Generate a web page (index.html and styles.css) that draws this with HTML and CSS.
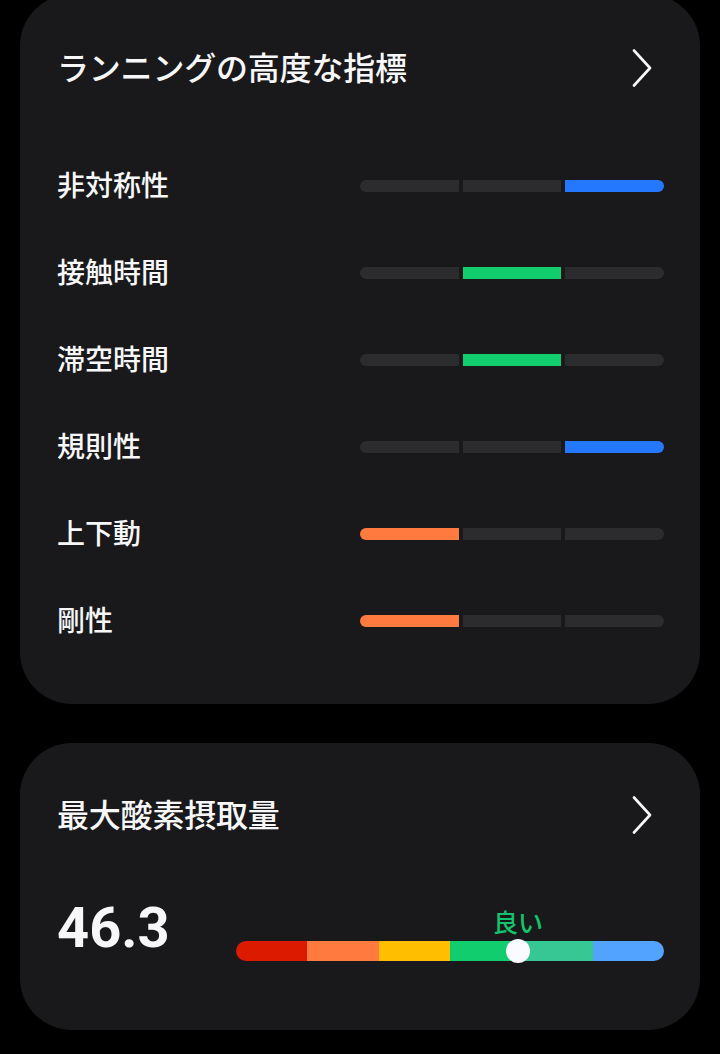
FILE: index.html
```html
<!DOCTYPE html>
<html lang="ja">
<head>
    <meta charset="UTF-8">
    <meta name="viewport" content="width=device-width, initial-scale=1.0">
    <title>ランニングの高度な指標</title>
    <link rel="stylesheet" href="styles.css">
</head>
<body>

<div class="card card-metrics">
    <div class="card-header">
        <h2>ランニングの高度な指標</h2>
        <svg class="chevron" width="20" height="38" viewBox="0 0 20 38"><polyline points="2,1.5 18,19 2,36.5" /></svg>
    </div>

    <div class="metric">
        <span class="metric-name">非対称性</span>
        <div class="segments"><span></span><span></span><span class="on blue"></span></div>
    </div>
    <div class="metric">
        <span class="metric-name">接触時間</span>
        <div class="segments"><span></span><span class="on green"></span><span></span></div>
    </div>
    <div class="metric">
        <span class="metric-name">滞空時間</span>
        <div class="segments"><span></span><span class="on green"></span><span></span></div>
    </div>
    <div class="metric">
        <span class="metric-name">規則性</span>
        <div class="segments"><span></span><span></span><span class="on blue"></span></div>
    </div>
    <div class="metric">
        <span class="metric-name">上下動</span>
        <div class="segments"><span class="on orange"></span><span></span><span></span></div>
    </div>
    <div class="metric">
        <span class="metric-name">剛性</span>
        <div class="segments"><span class="on orange"></span><span></span><span></span></div>
    </div>
</div>

<div class="card card-vo2">
    <div class="card-header">
        <h2>最大酸素摂取量</h2>
        <svg class="chevron" width="20" height="38" viewBox="0 0 20 38"><polyline points="2,1.5 18,19 2,36.5" /></svg>
    </div>

    <div class="vo2-body">
        <div class="vo2-value">46.3</div>
        <div class="scale">
            <div class="scale-label-row">
                <span class="scale-label" style="left: 65.9%">良い</span>
            </div>
            <div class="scale-bar">
                <span class="c1"></span><span class="c2"></span><span class="c3"></span>
                <span class="c4"></span><span class="c5"></span><span class="c6"></span>
                <span class="knob" style="left: 65.9%"></span>
            </div>
        </div>
    </div>
</div>

</body>
</html>
```

FILE: styles.css
```css
body {
    margin: 0;
    padding: 0 20px;
    background: #000;
    color: #f7f7f9;
    font-family: "Noto Sans CJK JP", "Noto Sans", sans-serif;
}
.card {
    background: #19191b;
    border-radius: 52px;
    padding: 0 36px 0 37px;
}
.card-metrics {
    margin-top: -6px;
    padding-top: 32px;
    padding-bottom: 42px;
}
.card-vo2 {
    margin-top: 39px;
    padding-top: 30px;
    padding-bottom: 69px;
}
.card-header {
    height: 80px;
    display: flex;
    align-items: center;
    justify-content: space-between;
}
.card-header h2 {
    margin: 0;
    font-size: 32px;
    font-weight: 500;
    letter-spacing: -0.2px;
}
.chevron {
    margin-top: 4px;
    margin-right: 12px;
}
.chevron polyline {
    fill: none;
    stroke: #f7f7f9;
    stroke-width: 2.6;
    stroke-linecap: round;
    stroke-linejoin: round;
}
.card-metrics .card-header {
    margin-bottom: 34px;
}
.metric {
    height: 87px;
    display: flex;
    align-items: center;
    justify-content: space-between;
}
.metric-name {
    font-size: 28px;
    font-weight: 500;
}
.segments {
    width: 304px;
    height: 12px;
    display: grid;
    grid-template-columns: 1fr 1fr 1fr;
    gap: 4px;
    border-radius: 6px;
    overflow: hidden;
}
/* the bar sits a little lower than the text centre */
.metric .segments {
    margin-top: 5px;
}
.segments span {
    background: #2c2c2e;
}
.segments .blue { background: #2478fe; }
.segments .green { background: #12cd6e; }
.segments .orange { background: #ff7a3f; }

.vo2-body {
    display: flex;
    align-items: flex-start;
    justify-content: space-between;
    margin-top: 47px;
}
.vo2-value {
    font-family: Roboto, "Liberation Sans", sans-serif;
    font-size: 56px;
    font-weight: 700;
    line-height: 1;
}
.scale {
    width: 428px;
}
.scale-label-row {
    position: relative;
    height: 41px;
}
.scale-label {
    position: absolute;
    bottom: 7px;
    transform: translateX(-50%);
    font-size: 25px;
    font-weight: 500;
    line-height: 1;
    color: #12c46e;
}
.scale-bar {
    position: relative;
    height: 20px;
    display: flex;
    border-radius: 10px;
}
.scale-bar span {
    flex: 1;
}
.scale-bar .c1 { background: #dc1a00; border-radius: 10px 0 0 10px; }
.scale-bar .c2 { background: #ff7a3f; }
.scale-bar .c3 { background: #ffbf00; }
.scale-bar .c4 { background: #12cd6e; }
.scale-bar .c5 { background: #36c794; }
.scale-bar .c6 { background: #52a3ff; border-radius: 0 10px 10px 0; }
.scale-bar .knob {
    position: absolute;
    top: -2px;
    width: 24px;
    height: 24px;
    margin-left: -12px;
    border-radius: 50%;
    background: #fafbff;
}
```
